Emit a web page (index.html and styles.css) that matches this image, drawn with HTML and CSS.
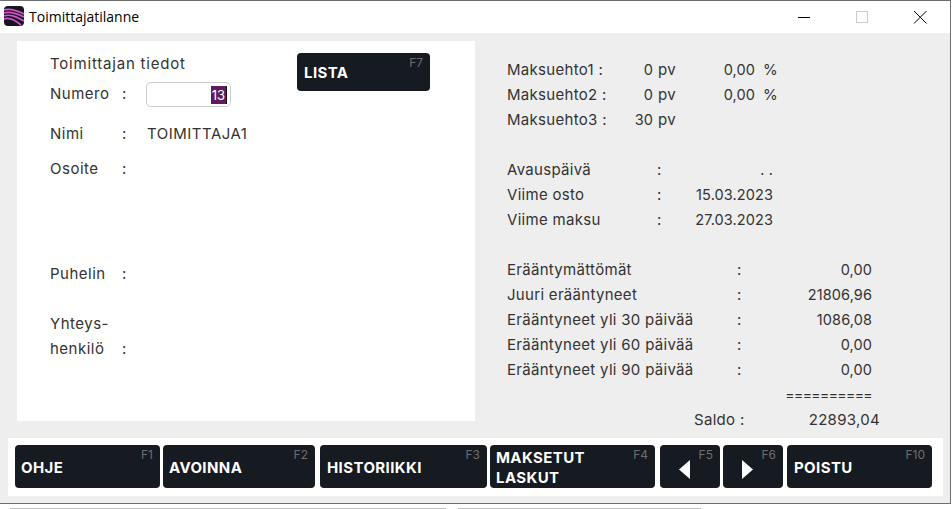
FILE: index.html
```html
<!DOCTYPE html>
<html lang="fi">
<head>
  <meta charset="UTF-8">
  <title>Toimittajatilanne</title>
  <link rel="stylesheet" href="styles.css">
</head>
<body>
  <div class="window">
    <div class="titlebar">
      <svg class="app-icon" width="20" height="20" viewBox="0 0 20 20">
        <rect width="20" height="20" rx="4" fill="#16161e"/>
        <path d="M0 4C6 2 12 4 20 8M0 7C6 5 12 7 20 11M0 10C6 8 11 10 20 15M0 13C5 11 10 13 17 19" fill="none" stroke="#d354cc" stroke-width="1.7"/>
      </svg>
      <span class="title-text">Toimittajatilanne</span>
      <div class="controls">
        <div class="control">
          <svg width="14" height="14" viewBox="0 0 14 14"><path d="M1 7.5H13" stroke="#000" fill="none"/></svg>
        </div>
        <div class="control">
          <svg width="14" height="14" viewBox="0 0 14 14"><rect x="1.5" y="1.5" width="11" height="11" stroke="#ccc" fill="none"/></svg>
        </div>
        <div class="control">
          <svg width="14" height="14" viewBox="0 0 14 14"><path d="M1 1L13.5 13.5M13.5 1L1 13.5" stroke="#000" fill="none"/></svg>
        </div>
      </div>
    </div>

    <div class="content">
      <div class="main">
        <div class="panel">
          <div class="panel-top">
            <div class="panel-top-left">
              <div class="heading">Toimittajan tiedot</div>
              <div class="row row-numero">
                <span>Numero</span><span>:</span>
                <div class="field"><span class="selected">13</span></div>
              </div>
            </div>
            <button class="btn btn-lista"><span class="key">F7</span>LISTA</button>
          </div>
          <div class="row row-nimi"><span>Nimi</span><span>:</span><span>TOIMITTAJA1</span></div>
          <div class="row row-osoite"><span>Osoite</span><span>:</span><span></span></div>
          <div class="row row-puhelin"><span>Puhelin</span><span>:</span><span></span></div>
          <div class="row row-yhteys"><span>Yhteys-</span><span></span><span></span></div>
          <div class="row"><span>henkilö</span><span>:</span><span></span></div>
        </div>

        <div class="summary">
          <div class="terms">
            <span>Maksuehto1 :</span><span class="num">0</span><span>pv</span><span class="num">0,00</span><span>%</span>
            <span>Maksuehto2 :</span><span class="num">0</span><span>pv</span><span class="num">0,00</span><span>%</span>
            <span>Maksuehto3 :</span><span class="num">30</span><span>pv</span><span></span><span></span>
          </div>
          <div class="dates">
            <span>Avauspäivä</span><span>:</span><span class="num">. .</span>
            <span>Viime osto</span><span>:</span><span class="num">15.03.2023</span>
            <span>Viime maksu</span><span>:</span><span class="num">27.03.2023</span>
          </div>
          <div class="amounts">
            <span>Erääntymättömät</span><span>:</span><span class="num">0,00</span>
            <span>Juuri erääntyneet</span><span>:</span><span class="num">21806,96</span>
            <span>Erääntyneet yli 30 päivää</span><span>:</span><span class="num">1086,08</span>
            <span>Erääntyneet yli 60 päivää</span><span>:</span><span class="num">0,00</span>
            <span>Erääntyneet yli 90 päivää</span><span>:</span><span class="num">0,00</span>
            <span></span><span></span><span class="num rule">==========</span>
          </div>
          <div class="saldo"><span>Saldo :</span><span class="num">22893,04</span></div>
        </div>
      </div>

      <div class="toolbar">
        <button class="btn btn-ohje"><span class="key">F1</span>OHJE</button>
        <button class="btn btn-avoinna"><span class="key">F2</span>AVOINNA</button>
        <button class="btn btn-historiikki"><span class="key">F3</span>HISTORIIKKI</button>
        <button class="btn btn-maksetut"><span class="key">F4</span>MAKSETUT<br>LASKUT</button>
        <button class="btn btn-arrow"><span class="key">F5</span>
          <svg width="11" height="19" viewBox="0 0 11 19"><path d="M11 0V19L0 9.5Z" fill="#fff"/></svg>
        </button>
        <button class="btn btn-arrow"><span class="key">F6</span>
          <svg width="11" height="19" viewBox="0 0 11 19"><path d="M0 0V19L11 9.5Z" fill="#fff"/></svg>
        </button>
        <button class="btn btn-poistu"><span class="key">F10</span>POISTU</button>
      </div>
    </div>
  </div>
  <div class="scroll-strip">
    <div class="strip-a"></div>
    <div class="strip-b"></div>
  </div>
</body>
</html>
```

FILE: styles.css
```css
html, body {
  margin: 0;
  height: 509px;
  overflow: hidden;
  background: #fff;
}
body {
  font-family: Inter, "Liberation Sans", sans-serif;
  font-size: 15px;
  letter-spacing: 0.3px;
  color: #333;
}
.window {
  width: 951px;
  height: 504px;
  box-sizing: border-box;
  border-top: 1px solid #6e6e6e;
  border-right: 1px solid #6e6e6e;
  border-bottom: 1px solid #6e6e6e;
  display: flex;
  flex-direction: column;
}
.titlebar {
  height: 32px;
  display: flex;
  align-items: center;
  background: #fff;
  padding: 0 1px 2px 4px;
  box-sizing: border-box;
  flex-shrink: 0;
}
.app-icon {
  margin-right: 5px;
}
.title-text {
  font-family: "Open Sans", sans-serif;
  font-size: 14px;
  letter-spacing: 0;
  color: #000;
}
.controls {
  margin-left: auto;
  display: flex;
}
.control {
  width: 58px;
  height: 30px;
  display: flex;
  align-items: center;
  justify-content: center;
  padding-top: 2px;
  box-sizing: content-box;
}
.content {
  flex: 1;
  background: #eee;
  display: flex;
  flex-direction: column;
  padding-top: 8px;
}
.main {
  display: flex;
  height: 380px;
  padding-left: 17px;
}
.panel {
  width: 458px;
  background: #fff;
  box-sizing: border-box;
  padding: 11px 0 0 33px;
  letter-spacing: 0.5px;
}
.panel-top {
  display: flex;
}
.panel-top-left {
  width: 247px;
}
.heading {
  height: 25px;
  line-height: 24px;
  letter-spacing: 0.8px;
}
.row {
  display: grid;
  grid-template-columns: 72px 25px 1fr;
  height: 25px;
  line-height: 24px;
}
.row-numero {
  margin-top: 5px;
}
.row-nimi {
  margin-top: 15px;
}
.row-osoite {
  margin-top: 10px;
}
.row-puhelin {
  margin-top: 80px;
}
.row-yhteys {
  margin-top: 25px;
}
.field {
  width: 85px;
  height: 25px;
  margin-left: -1px;
  box-sizing: border-box;
  border: 1px solid #ccc;
  border-radius: 5px;
  display: flex;
  justify-content: flex-end;
  align-items: center;
  padding-right: 3px;
}
.selected {
  background: #5f1b5f;
  color: #fff;
  height: 18px;
  line-height: 18px;
  width: 16px;
  text-align: center;
  border-right: 1px solid #111;
  box-sizing: border-box;
  font-size: 13px;
  letter-spacing: 0;
}
.summary {
  padding: 16px 0 0 32px;
  flex: 1;
  line-height: 25px;
}
.num {
  text-align: right;
  font-size: 14.5px;
  letter-spacing: 0.1px;
}
.rule {
  font-size: 14px;
  letter-spacing: -0.6px;
}
.terms {
  display: grid;
  grid-template-columns: 125px 21px 30px 72px 26px;
  grid-auto-rows: 25px;
  width: 274px;
}
.terms span:nth-child(5n+3) {
  padding-left: 5px;
}
.terms span:nth-child(5n) {
  padding-left: 8px;
}
.dates {
  display: grid;
  grid-template-columns: 150px 30px 86px;
  grid-auto-rows: 25px;
  margin-top: 25px;
}
.amounts {
  display: grid;
  grid-template-columns: 230px 30px 105px;
  grid-auto-rows: 25px;
  margin-top: 25px;
}
.saldo {
  display: flex;
  justify-content: space-between;
  height: 25px;
  margin: 0 70px 0 187px;
}
.saldo .num {
  font-size: 15px;
  letter-spacing: 0.3px;
}
.toolbar {
  margin: 17px 7px 0 8px;
  height: 58px;
  box-sizing: border-box;
  background: #fff;
  padding: 7px;
  display: flex;
}
.btn {
  position: relative;
  height: 43px;
  flex-shrink: 0;
  box-sizing: border-box;
  background: #161a21;
  border: none;
  border-radius: 4px;
  color: #fff;
  font-family: Inter, "Liberation Sans", sans-serif;
  font-size: 15px;
  font-weight: 700;
  letter-spacing: 0.4px;
  line-height: 20px;
  text-align: left;
  padding: 2px 6px 0;
}
.key {
  position: absolute;
  top: 3px;
  right: 7px;
  font-size: 12px;
  font-weight: 400;
  letter-spacing: 0;
  line-height: 14px;
  color: #6e6e6e;
}
.btn-lista {
  width: 133px;
  height: 38px;
  margin-top: 1px;
  padding-left: 7px;
}
.btn-ohje {
  width: 145px;
  margin-right: 3px;
}
.btn-avoinna {
  width: 152px;
  margin-right: 5px;
}
.btn-historiikki {
  width: 167px;
  margin-right: 3px;
  padding-left: 7px;
}
.btn-maksetut {
  width: 165px;
  margin-right: 5px;
}
.btn-arrow {
  width: 60px;
  margin-right: 3px;
  padding: 5px 0 0 19px;
}
.btn-arrow svg {
  display: block;
}
.btn-poistu {
  width: 145px;
  margin-left: 1px;
  padding-left: 7px;
}
.scroll-strip {
  height: 5px;
  display: flex;
  align-items: flex-end;
  padding-left: 10px;
}
.strip-a {
  width: 436px;
  height: 1px;
  background: #bbb;
}
.strip-b {
  width: 243px;
  height: 1px;
  margin-left: 12px;
  background: #bbb;
}
```
